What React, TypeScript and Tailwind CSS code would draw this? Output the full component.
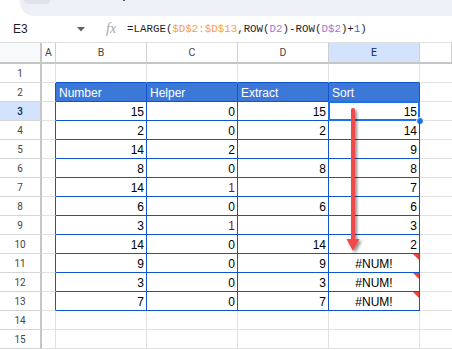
import React from "react";

type Cell = string | number;
const rows: { n: number; cells: Cell[] }[] = [
  { n: 1, cells: ["", "", "", "", ""] },
  { n: 2, cells: ["", "Number", "Helper", "Extract", "Sort"] },
  { n: 3, cells: ["", 15, 0, 15, 15] },
  { n: 4, cells: ["", 2, 0, 2, 14] },
  { n: 5, cells: ["", 14, 2, "", 9] },
  { n: 6, cells: ["", 8, 0, 8, 8] },
  { n: 7, cells: ["", 14, 1, "", 7] },
  { n: 8, cells: ["", 6, 0, 6, 6] },
  { n: 9, cells: ["", 3, 1, "", 3] },
  { n: 10, cells: ["", 14, 0, 14, 2] },
  { n: 11, cells: ["", 9, 0, 9, "#NUM!"] },
  { n: 12, cells: ["", 3, 0, 3, "#NUM!"] },
  { n: 13, cells: ["", 7, 0, 7, "#NUM!"] },
  { n: 14, cells: ["", "", "", "", ""] },
  { n: 15, cells: ["", "", "", "", ""] },
];

const GRID = "grid grid-cols-[42px_14px_91px_91px_91px_91px_32px]";

function DataCell({ r, c, v }: { r: number; c: number; v: Cell }) {
  const inTable = r >= 2 && r <= 13 && c >= 1 && c <= 4;
  const isHeader = r === 2 && inTable;
  let border = "border-r border-b border-[#e2e2e2]";
  if (inTable) border = "border-r border-b border-[#1155cc]";
  else if (c === 0 && r >= 2 && r <= 13) border = "border-r border-b border-r-[#1155cc] border-b-[#e2e2e2]";
  else if (r === 1 && c >= 1 && c <= 4) border = "border-r border-b border-r-[#e2e2e2] border-b-[#1155cc]";
  const isErr = v === "#NUM!";
  const red = c === 2 && v === 1;
  const align = isHeader ? "justify-start pl-[3px]" : isErr ? "justify-center" : "justify-end pr-[2px]";
  return (
    <div
      className={`relative h-[19px] flex items-end pb-[1px] text-[12px] leading-[14px] ${border} ${align} ${
        isHeader ? "bg-[#3c78d8] text-white" : red ? "text-[#8e0d0d]" : "text-black"
      }`}
    >
      <span>{v}</span>
      {isErr && (
        <svg className="absolute top-0 right-0" width="6" height="6" viewBox="0 0 6 6">
          <polygon points="0,0 6,0 6,6" fill="#e8453c" />
        </svg>
      )}
      {r === 3 && c === 4 && (
        <>
          <div className="absolute left-[-1px] top-[-1px] w-[92px] h-[20px] border-2 border-[#1a73e8]" />
          <div className="absolute right-[-5px] bottom-[-5px] w-[8px] h-[8px] rounded-full bg-[#1a73e8] border border-white" />
        </>
      )}
    </div>
  );
}

export default function App() {
  const colLetters = ["A", "B", "C", "D", "E", ""];
  return (
    <div className="relative w-[452px] h-[350px] overflow-hidden bg-white font-['Liberation_Sans',Arial,sans-serif]">
      {/* top band */}
      <div className="h-[16px] flex">
        <div className="w-[20px]" />
        <div className="flex-1 bg-[#edf1f7] rounded-bl-[14px] relative">
          <div className="absolute left-[4px] top-0 w-[26px] h-[4px] bg-[#dfe4ec] rounded-b-[4px]" />
          <div className="absolute left-[103px] top-0 w-[2px] h-[1px] bg-[#555]" />
        </div>
      </div>
      {/* formula bar */}
      <div className="h-[27px] flex items-center border-b border-[#e0e0e0] pl-[13px] text-[12px] text-[#1f1f1f]">
        <span className="w-[64px]">E3</span>
        <svg width="8" height="5" viewBox="0 0 8 5">
          <polygon points="0,0 8,0 4,4.5" fill="#5f6368" />
        </svg>
        <span className="ml-[21px] w-[13px] font-['Liberation_Serif',serif] italic text-[14px] text-[#a8a8a8] leading-none">fx</span>
        <span className="ml-[8px] font-['Liberation_Mono',monospace] text-[10.8px] text-[#1f1f1f] whitespace-pre">
          =LARGE(<span className="text-[#f4a04c]">$D$2:$D$13</span>,ROW(<span className="text-[#a872cf]">D2</span>)-ROW(
          <span className="text-[#a872cf]">D$2</span>)+<span className="text-[#1a73e8]">1</span>)
        </span>
      </div>
      {/* column headers */}
      <div className={`${GRID} h-[21px]`}>
        <div className="bg-[#f8f9fa] border-r-2 border-b-2 border-[#c4c7c5]" />
        {colLetters.map((l, i) => (
          <div
            key={i}
            className={`flex items-center justify-center border-b-2 border-b-[#c4c7c5] border-r border-r-[#d0d0d0] font-['Roboto',sans-serif] text-[10.5px] ${
              l === "E" ? "bg-[#d3e3fd] text-[#0b2a5e]" : "bg-white text-[#444746]"
            }`}
          >
            {l}
          </div>
        ))}
      </div>
      {/* rows */}
      {rows.map((row) => (
        <div key={row.n} className={GRID}>
          <div
            className={`h-[19px] flex items-center justify-center border-r-2 border-r-[#c4c7c5] border-b border-b-[#d6d6d6] font-['Roboto',sans-serif] text-[10px] ${
              row.n === 3 ? "bg-[#d3e3fd] text-[#0b2a5e] font-medium" : "bg-white text-[#444746]"
            }`}
          >
            {row.n}
          </div>
          {row.cells.map((v, c) => (
            <DataCell key={c} r={row.n} c={c} v={v} />
          ))}
          <div className="h-[19px] border-b border-[#e2e2e2]" />
        </div>
      ))}
      {/* red arrow overlay */}
      <svg className="absolute left-0 top-0 pointer-events-none" width="452" height="350" viewBox="0 0 452 350">
        <defs>
          <filter id="sh" x="-50%" y="-10%" width="200%" height="130%">
            <feDropShadow dx="2" dy="2" stdDeviation="1.6" floodColor="#000" floodOpacity="0.45" />
          </filter>
        </defs>
        <g filter="url(#sh)">
          <line x1="353" y1="110" x2="353" y2="241" stroke="#f0484b" strokeWidth="4" strokeLinecap="round" />
          <polygon points="346.5,239 359.5,239 353,251" fill="#f0484b" />
        </g>
      </svg>
    </div>
  );
}
